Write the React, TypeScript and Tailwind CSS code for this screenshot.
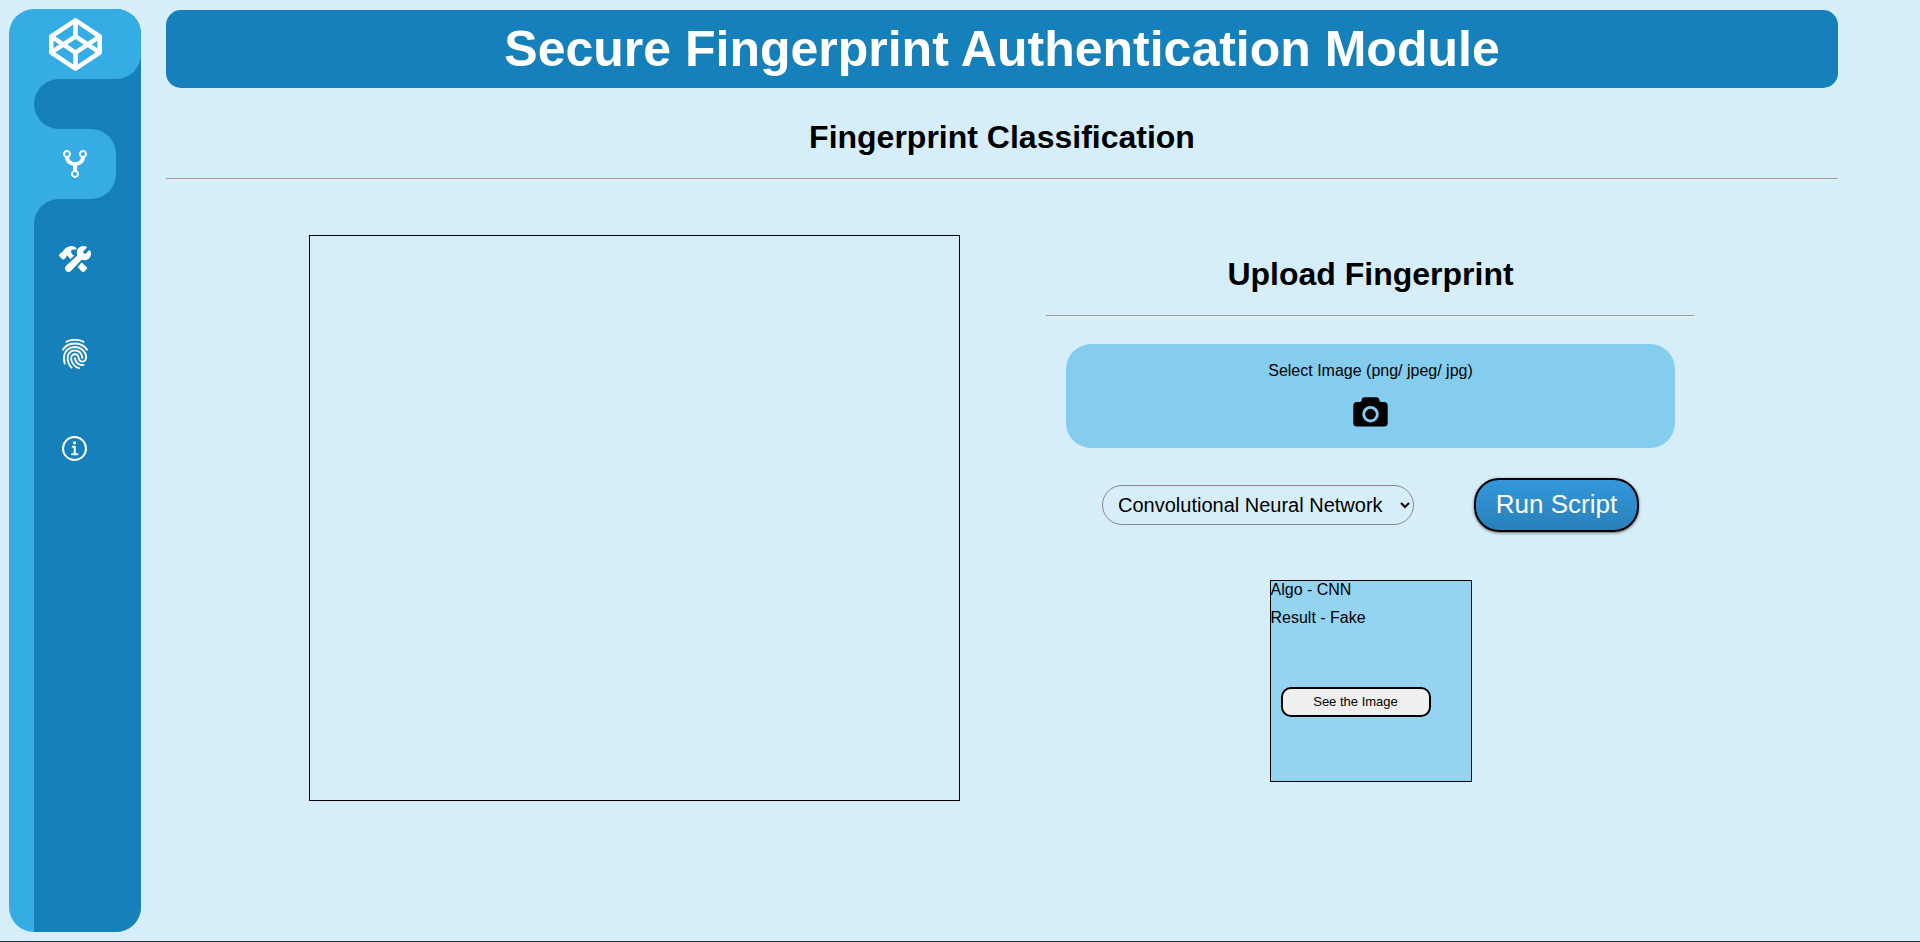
import React from "react";
import { FaCodepen } from "react-icons/fa";
import { IoConstruct, IoFingerPrint, IoGitNetwork, IoInformationCircleOutline } from "react-icons/io5";

const links = [
  { label: "Preprocessing", Icon: IoConstruct },
  { label: "Fingerprint", Icon: IoFingerPrint },
  { label: "About", Icon: IoInformationCircleOutline },
];

function Rule() {
  return <hr className="h-[2px] border border-[#9a9a9a] border-r-[#eeeeee] border-b-[#eeeeee]" />;
}

function CameraIcon() {
  return (
    <svg viewBox="0 0 35 30" className="mt-4 h-[30px] w-[35px]" aria-hidden="true">
      <path
        d="M4 5H6.5Q8.700 5 8.700 3.600Q8.700 0.3 12 0.3H23Q26.300 0.3 26.300 3.600Q26.300 5 28.500 5H31Q34.700 5 34.700 8.700V26Q34.700 29.500 31 29.500H4Q0.3 29.500 0.3 26V8.700Q0.3 5 4 5Z"
        fill="black"
      />
      <circle cx="17.500" cy="17.200" r="6.800" fill="none" stroke="#85cdee" strokeWidth="2.900" />
    </svg>
  );
}

function Sidebar() {
  return (
    <aside className="m-[9px] mr-0 flex w-[132px] shrink-0 flex-col overflow-hidden rounded-[25px] bg-[#35ace3] pl-[25px]">
      <div className="bg-[#1580b9]">
        <div className="h-[70px] rounded-r-[25px] bg-[#35ace3]">
          <a href="#home" aria-label="Home" className="flex h-full w-[82px] items-center justify-center text-white">
            <FaCodepen size={53} />
          </a>
        </div>
      </div>
      <div className="h-[50px] rounded-l-[25px] bg-[#1580b9]" />
      <nav className="flex flex-1 flex-col">
        <div className="bg-[#1580b9]">
          <a
            href="#classification"
            aria-label="Classification"
            className="flex h-[70px] w-[82px] items-center justify-center rounded-r-[25px] bg-[#35ace3] text-white"
          >
            <IoGitNetwork size={32} />
          </a>
        </div>
        <div className="flex flex-1 flex-col gap-[25px] rounded-tl-[25px] bg-[#1580b9] pt-[25px]">
          {links.map(({ label, Icon }) => (
            <a
              key={label}
              href={"#" + label.toLowerCase()}
              aria-label={label}
              className="flex h-[70px] w-[82px] items-center justify-center text-white"
            >
              <Icon size={32} />
            </a>
          ))}
        </div>
      </nav>
    </aside>
  );
}

function UploadPanel() {
  return (
    <section className="flex min-w-0 flex-1 flex-col">
      <h2 className="pt-[21px] pb-[23px] text-center text-[32px] leading-9 font-bold">Upload Fingerprint</h2>
      <Rule />
      <label className="mx-5 mt-[27px] flex h-[104px] cursor-pointer flex-col items-center rounded-[25px] bg-[#85cdee] pt-[17px]">
        <span className="text-base leading-5">Select Image (png/ jpeg/ jpg)</span>
        <CameraIcon />
        <input type="file" accept="image/png, image/jpeg" className="sr-only" />
      </label>
      <div className="mt-[30px] flex items-center justify-center gap-[60px]">
        <select
          aria-label="Algorithm"
          className="h-10 w-[312px] rounded-[20px] border border-[#8f8589] bg-transparent px-[11px] text-[20px]"
        >
          <option>Convolutional Neural Network</option>
        </select>
        <button
          type="button"
          className="h-[54px] w-[165px] rounded-[25px] border-2 border-black bg-linear-to-b from-[#3498db] to-[#2980b9] pb-[2px] text-[26px] leading-8 text-white shadow-[0_1px_3px_#666666]"
        >
          Run Script
        </button>
      </div>
      <div className="mt-12 flex h-[202px] w-[202px] flex-col self-center border border-black bg-[#95d4f0]">
        <p className="leading-[18px]">Algo - CNN</p>
        <p className="mt-[10px] leading-[18px]">Result - Fake</p>
        <button
          type="button"
          className="mt-15 ml-[10px] h-[30px] w-[150px] rounded-[10px] border-2 border-black bg-[#efefef] text-[13px]"
        >
          See the Image
        </button>
      </div>
    </section>
  );
}

export default function App() {
  return (
    <div className="flex min-h-screen border-b border-[#333333] bg-[#d6eefa] font-['Liberation_Sans',Arial,sans-serif] text-black">
      <Sidebar />
      <main className="mr-[82px] ml-[25px] min-w-0 flex-1 pt-[10px]">
        <h1 className="h-[78px] rounded-[15px] bg-[#1580b9] text-center text-[50px] leading-[78px] font-bold text-white">
          Secure Fingerprint Authentication Module
        </h1>
        <h2 className="pt-[31px] pb-[23px] text-center text-[32px] leading-9 font-bold">Fingerprint Classification</h2>
        <Rule />
        <div className="mt-[55px] flex gap-[86px] px-[143px]">
          <div className="h-[566px] min-w-0 flex-1 border border-black" />
          <UploadPanel />
        </div>
      </main>
    </div>
  );
}
